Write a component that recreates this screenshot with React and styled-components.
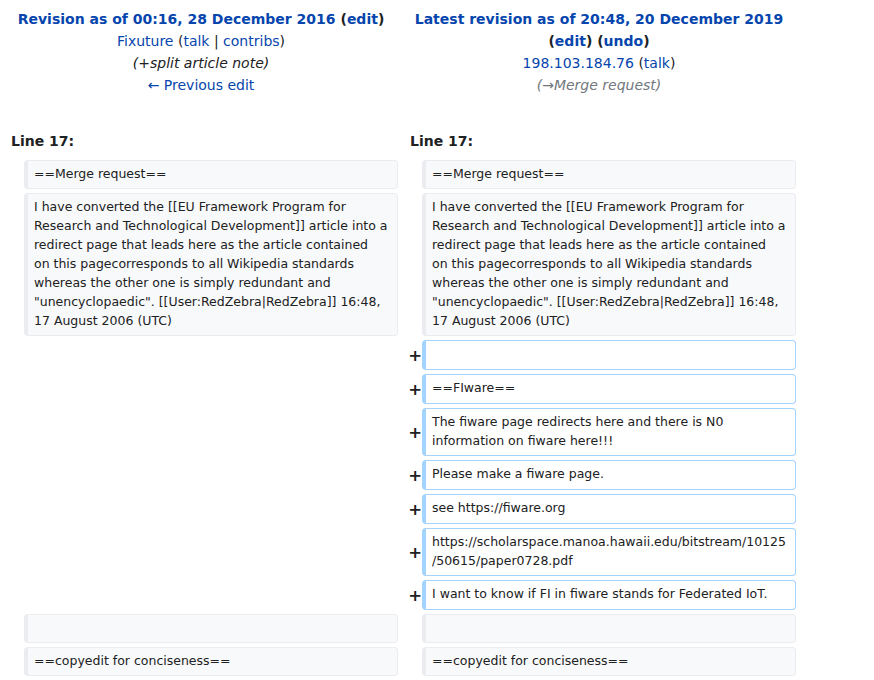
import React from 'react';
import styled, { createGlobalStyle } from 'styled-components';

const GlobalStyle = createGlobalStyle`
    body {
        margin: 8px;
        background: #ffffff;
        color: #202122;
        font-family: "DejaVu Sans", sans-serif;
        font-size: 14px;
    }
`

const DiffTable = styled.div`
    display: grid;
    grid-template-columns: 16px 374px 24px 374px;
    row-gap: 4px;
    width: 788px;
`

const Header = styled.div`
    grid-column: span 2;
    text-align: center;
    line-height: 22px;
    padding-left: ${props => props.right ? '4px' : '0'};
    padding-right: ${props => props.right ? '0' : '4px'};
`

const Title = styled.div`
    font-weight: bold;
`

const Link = styled.a`
    color: #0645ad;
    text-decoration: none;
    cursor: pointer;
`

const Comment = styled.div`
    font-style: italic;
    color: ${props => props.muted ? '#72777d' : '#202122'};
`

const LineNo = styled.div`
    grid-column: span 2;
    font-weight: bold;
    line-height: 22px;
    margin-top: 30px;
    padding-bottom: 4px;
    padding-left: ${props => props.right ? '12px' : '3px'};
`

const Marker = styled.div`
    display: flex;
    align-items: center;
    justify-content: flex-end;
    font-weight: bold;
    font-size: 16.5px;
    min-height: ${props => props.sign ? '30px' : '0'};
`

const Empty = styled.div`
    grid-column: span 2;
`

const Line = styled.div`
    font-size: 12.5px;
    line-height: 19px;
    min-height: 19px;
    padding: 3px 6px 5px 6px;
    white-space: pre-wrap;
    overflow-wrap: break-word;
    border-style: solid;
    border-width: 1px 1px 1px 4px;
    border-radius: 4px;
    border-color: ${props => props.added ? '#a3d3ff' : '#eaecf0'};
    background: ${props => props.added ? '#ffffff' : '#f8f9fa'};
    color: #202122;
`

// wrapped where the reference wraps it
const mergeNote = [
    'I have converted the [[EU Framework Program for',
    'Research and Technological Development]] article into a',
    'redirect page that leads here as the article contained',
    'on this pagecorresponds to all Wikipedia standards',
    'whereas the other one is simply redundant and',
    '"unencyclopaedic". [[User:RedZebra|RedZebra]] 16:48,',
    '17 August 2006 (UTC)',
].join('\n')

const added = [
    '',
    '==FIware==',
    'The fiware page redirects here and there is N0 information on fiware here!!!',
    'Please make a fiware page.',
    'see https://fiware.org',
    'https://scholarspace.manoa.hawaii.edu/bitstream/10125/50615/paper0728.pdf',
    'I want to know if FI in fiware stands for Federated IoT.',
]

const ContextRow = ({ text }) => (
    <>
        <Marker />
        <Line>{text}</Line>
        <Marker />
        <Line>{text}</Line>
    </>
)

const App = () => {
    return (
        <>
            <GlobalStyle />
            <DiffTable>
                <Header>
                    <Title>
                        <Link>Revision as of 00:16, 28 December 2016</Link> (<Link>edit</Link>)
                    </Title>
                    <div><Link>Fixuture</Link> (<Link>talk</Link> | <Link>contribs</Link>)</div>
                    <Comment>(+split article note)</Comment>
                    <div><Link>← Previous edit</Link></div>
                </Header>
                <Header right>
                    <Title>
                        <Link>Latest revision as of 20:48, 20 December 2019</Link> (<Link>edit</Link>) (<Link>undo</Link>)
                    </Title>
                    <div><Link>198.103.184.76</Link> (<Link>talk</Link>)</div>
                    <Comment muted>(→Merge request)</Comment>
                </Header>

                <LineNo>Line 17:</LineNo>
                <LineNo right>Line 17:</LineNo>

                <ContextRow text="==Merge request==" />
                <ContextRow text={mergeNote} />

                {added.map((text, i) => (
                    <React.Fragment key={i}>
                        <Empty />
                        <Marker sign>+</Marker>
                        <Line added>{text}</Line>
                    </React.Fragment>
                ))}

                <ContextRow text="" />
                <ContextRow text="==copyedit for conciseness==" />
            </DiffTable>
        </>
    );
}

export default App;
